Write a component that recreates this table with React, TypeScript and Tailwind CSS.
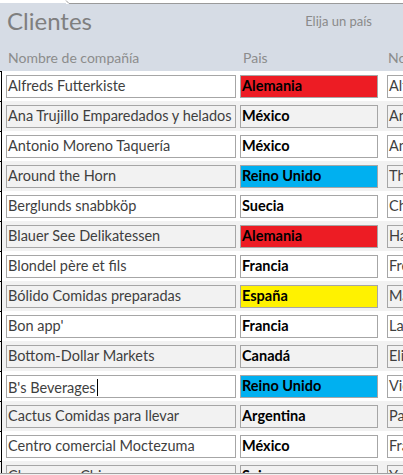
const rows: { name: string; country: string; contact: string; tint?: string }[] = [
  { name: "Alfreds Futterkiste", country: "Alemania", contact: "Alfreds", tint: "bg-[#ed1c24]" },
  { name: "Ana Trujillo Emparedados y helados", country: "México", contact: "Ana Trujillo" },
  { name: "Antonio Moreno Taquería", country: "México", contact: "Antonio Moreno" },
  { name: "Around the Horn", country: "Reino Unido", contact: "Thomas Hardy", tint: "bg-[#00b0f0]" },
  { name: "Berglunds snabbköp", country: "Suecia", contact: "Christina Berglund" },
  { name: "Blauer See Delikatessen", country: "Alemania", contact: "Hanna Moos", tint: "bg-[#ed1c24]" },
  { name: "Blondel père et fils", country: "Francia", contact: "Frédérique Citeaux" },
  { name: "Bólido Comidas preparadas", country: "España", contact: "Martín Sommer", tint: "bg-[#fff200]" },
  { name: "Bon app'", country: "Francia", contact: "Laurence Lebihan" },
  { name: "Bottom-Dollar Markets", country: "Canadá", contact: "Elizabeth Lincoln" },
  { name: "B's Beverages", country: "Reino Unido", contact: "Victoria Ashworth", tint: "bg-[#00b0f0]" },
  { name: "Cactus Comidas para llevar", country: "Argentina", contact: "Patricio Simpson" },
  { name: "Centro comercial Moctezuma", country: "México", contact: "Francisco Chang" },
  { name: "Chop-suey Chinese", country: "Suiza", contact: "Yang Wang" },
];

const font = { fontFamily: "Lato, 'Liberation Sans', sans-serif" };

export default function App() {
  return (
    <div className="relative h-[475px] w-[403px] overflow-hidden bg-white" style={font}>
      <svg width="403" height="4" className="block">
        <line x1="0" y1="3.5" x2="66" y2="3.5" stroke="#d6dce5" />
        <path d="M66 0.5 L69 3.5 L403 3.5" fill="none" stroke="#9a9a9a" />
      </svg>

      <div className="h-[67px] bg-[#d6dce5]">
        <div className="flex items-start justify-between pl-[7px] pr-[31px]">
          <h1 className="text-[24px] leading-[34px] text-[#7f7f7f]">Clientes</h1>
          <span className="pt-[8px] text-[13px] text-[#8a8a8a]">Elija un país</span>
        </div>
        <div className="mt-[11px] flex whitespace-nowrap text-[14px] leading-[18px] text-[#8c8c8c]">
          <span className="w-[242px] shrink-0 pl-[8px]">Nombre de compañía</span>
          <span className="w-[146px] shrink-0 pl-[1px]">Pais</span>
          <span className="shrink-0">Nombre de contacto</span>
        </div>
      </div>

      {rows.map((r, i) => {
        const bg = i % 2 === 0 ? "bg-white" : "bg-[#f2f2f2]";
        return (
          <div key={r.name} className={`flex h-[30px] ${bg}`}>
            <div className="w-[2px] shrink-0 border-t border-r border-black" />
            <div className="flex shrink-0 gap-[4px] pl-[4px] pt-[4px]">
              <div
                className={`h-[23px] w-[230px] shrink-0 overflow-hidden whitespace-nowrap border border-[#a6a6a6] pl-[1px] text-[14.5px] leading-[20px] text-[#3f3f3f] ${bg}`}
              >
                {r.name}
                {r.name === "B's Beverages" && (
                  <span className="ml-[1px] inline-block h-[17px] w-px translate-y-[3px] bg-black" />
                )}
              </div>
              <div
                className={`h-[23px] w-[138px] shrink-0 border border-[#a6a6a6] pl-[1px] text-[14.5px] font-bold leading-[20px] text-black ${r.tint ?? bg}`}
              >
                {r.country}
              </div>
              <div
                className={`ml-[5px] h-[23px] w-[120px] shrink-0 overflow-hidden whitespace-nowrap border border-[#a6a6a6] pl-[1px] text-[14.5px] leading-[20px] text-[#3f3f3f] ${bg}`}
              >
                {r.contact}
              </div>
            </div>
          </div>
        );
      })}

      <div className="absolute bottom-0 left-0 h-[2px] w-full border-t border-[#a0a0a0] bg-[#f0f0f0]" />
    </div>
  );
}
